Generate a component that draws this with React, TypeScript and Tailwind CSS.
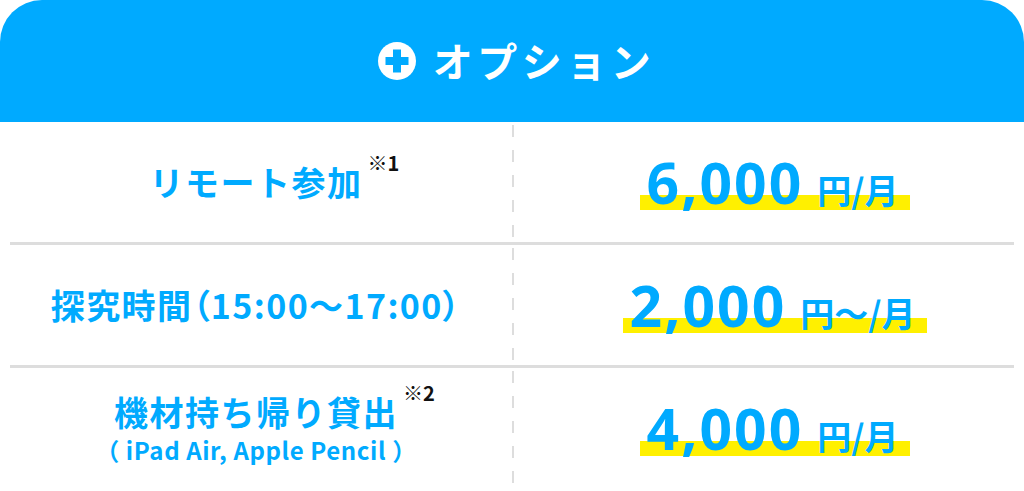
const jp = "font-['Noto_Sans_CJK_JP',sans-serif]";
const num = "font-['Noto_Sans','Noto_Sans_CJK_JP',sans-serif]";

const rows = [
  { label: "リモート参加", note: "※1", price: "6,000", unit: "円/月", palt: false },
  { label: "探究時間（15:00〜17:00）", note: "", price: "2,000", unit: "円〜/月", palt: true },
  {
    label: "機材持ち帰り貸出",
    note: "※2",
    sub: "（ iPad Air, Apple Pencil ）",
    price: "4,000",
    unit: "円/月",
    palt: false,
  },
];

const PlusIcon = () => (
  <svg width="40" height="40" viewBox="0 0 40 40">
    <circle cx="20" cy="20" r="19" fill="#fff" />
    <rect x="16" y="8.5" width="8" height="23" fill="#00aaff" />
    <rect x="8.5" y="16" width="23" height="8" fill="#00aaff" />
  </svg>
);

const App = () => {
  return (
    <div className={`w-[1024px] h-[491px] bg-white overflow-hidden ${jp}`}>
      <div className="h-[122px] rounded-t-[42px] bg-[#00aaff] flex items-center justify-center gap-[16px] pl-[8px]">
        <PlusIcon />
        <span className="text-white font-bold text-[40px] tracking-[4.5px] leading-none pb-[2px]">
          オプション
        </span>
      </div>

      {rows.map((row, i) => (
        <div key={i}>
          {i > 0 && <div className="mx-[10px] h-[3px] bg-[#dddddd]" />}
          <div className="h-[120px] grid grid-cols-2">
            <div className="flex flex-col items-center justify-center">
              <div className="relative">
                <span
                  className={`block text-[#00aaff] font-bold text-[34px] leading-[38px] ${
                    row.palt ? "tracking-[1.4px] [font-feature-settings:'palt']" : "tracking-[1.5px]"
                  }`}
                >
                  {row.label}
                </span>
                {row.note && (
                  <span className="absolute left-full top-[-10px] ml-[5px] text-[20px] font-bold text-[#111] whitespace-nowrap leading-none">
                    {row.note}
                  </span>
                )}
              </div>
              {row.sub && (
                <span className="block text-[#00aaff] font-bold text-[24px] tracking-[0.6px] leading-[28px] mt-[5px]">
                  {row.sub}
                </span>
              )}
            </div>
            <div className="flex items-center justify-center pl-[9px] bg-[linear-gradient(to_bottom,#dddddd_50%,transparent_50%)] bg-[length:3px_25px] bg-repeat-y bg-[position:-1px_3px]">
              <div className="relative flex items-baseline">
                <span className="absolute left-[-7px] right-[-12px] bottom-[1px] h-[15px] bg-[#fff000]" />
                <span className={`relative text-[#00aaff] font-bold text-[57px] tracking-[2px] leading-none ${num}`}>
                  {row.price}
                </span>
                <span className="relative ml-[14px] text-[#00aaff] font-bold text-[34px] leading-none">
                  {row.unit}
                </span>
              </div>
            </div>
          </div>
        </div>
      ))}
    </div>
  );
};

export default App;
